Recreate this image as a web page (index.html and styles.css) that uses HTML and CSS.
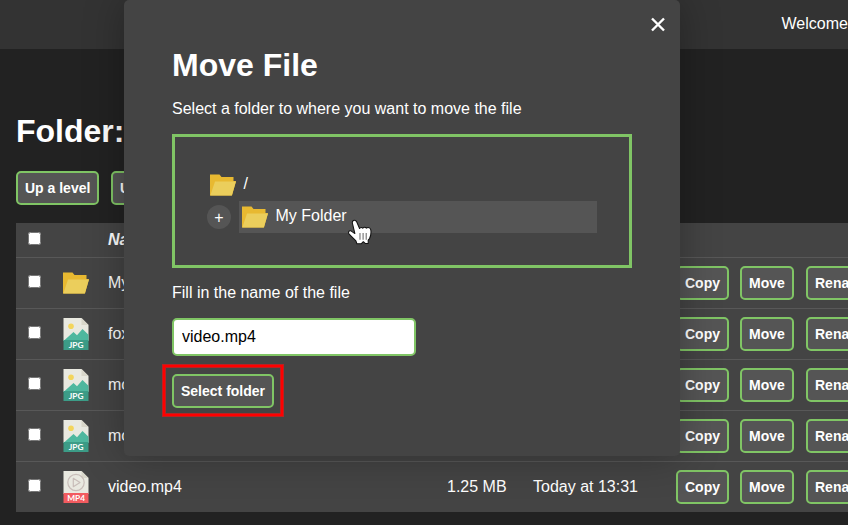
FILE: index.html
```html
<!DOCTYPE html>
<html lang="en">
<head>
<meta charset="utf-8">
<title>Move File</title>
<link rel="stylesheet" href="styles.css">
</head>
<body>
<svg class="defs" width="0" height="0">
  <symbol id="folder" viewBox="0 0 26 22">
    <path fill="#e8b931" d="M0 0.4H9.5L11.5 3H23.5V7H26L22 21.6H0Z"/>
    <path fill="#ebce5c" d="M5 7.5H26L21.8 21.6H0.3Z"/>
  </symbol>
  <symbol id="jpg" viewBox="0 0 26 32">
    <path fill="#e9e9e0" d="M.5 0H18.5L25.5 7V23H.5Z"/>
    <path fill="#d9d7ca" d="M18.5 0V7H25.5Z"/>
    <circle cx="8" cy="8.3" r="2.8" fill="#f3d55b"/>
    <path fill="#4fb89f" d="M.5 23L10.5 14L14 17.2L19.5 11L25.5 16.8V23Z"/>
    <path fill="#3c9c87" d="M.5 22H25.5V32H.5Z"/>
    <text x="13.1" y="30.2" class="ext">JPG</text>
  </symbol>
  <symbol id="mp4" viewBox="0 0 26 32">
    <path fill="#e9e9e0" d="M.5 0H18.5L25.5 7V23H.5Z"/>
    <path fill="#d9d7ca" d="M18.5 0V7H25.5Z"/>
    <circle cx="13" cy="11.5" r="8.2" fill="none" stroke="#c8bdb8" stroke-width="1.2"/>
    <path fill="none" stroke="#c8bdb8" stroke-width="1.2" stroke-linejoin="round" d="M10.3 7.3L17 11.5L10.3 15.7Z"/>
    <path fill="#f25b5f" d="M.5 22H25.5V32H.5Z"/>
    <text x="13.1" y="30.2" class="ext">MP4</text>
  </symbol>
</svg>

<header class="topbar">Welcome</header>
<main class="page">
  <h1 class="heading">Folder:</h1>
  <div class="toolbar">
    <button class="btn up">Up a level</button>
    <button class="btn">Upload</button>
  </div>
  <div class="files">
    <div class="row head"><input type="checkbox"><span></span><em>Name</em></div>
    <div class="row">
      <input type="checkbox"><svg class="folder"><use href="#folder"/></svg><span>My Folder</span><span></span><span></span>
      <div class="actions"><button class="btn copy">Copy</button><button class="btn move">Move</button><button class="btn">Rename</button></div>
    </div>
    <div class="row">
      <input type="checkbox"><svg class="doc"><use href="#jpg"/></svg><span>fox.jpg</span><span></span><span></span>
      <div class="actions"><button class="btn copy">Copy</button><button class="btn move">Move</button><button class="btn">Rename</button></div>
    </div>
    <div class="row">
      <input type="checkbox"><svg class="doc"><use href="#jpg"/></svg><span>mo</span><span></span><span></span>
      <div class="actions"><button class="btn copy">Copy</button><button class="btn move">Move</button><button class="btn">Rename</button></div>
    </div>
    <div class="row">
      <input type="checkbox"><svg class="doc"><use href="#jpg"/></svg><span>mo</span><span></span><span></span>
      <div class="actions"><button class="btn copy">Copy</button><button class="btn move">Move</button><button class="btn">Rename</button></div>
    </div>
    <div class="row">
      <input type="checkbox"><svg class="doc"><use href="#mp4"/></svg><span>video.mp4</span><span>1.25 MB</span><span>Today at 13:31</span>
      <div class="actions"><button class="btn copy">Copy</button><button class="btn move">Move</button><button class="btn">Rename</button></div>
    </div>
  </div>
</main>

<section class="modal">
  <svg class="close" viewBox="0 0 14 14"><path d="M1 1L13 13M13 1L1 13"/></svg>
  <h2 class="heading">Move File</h2>
  <p class="hint">Select a folder to where you want to move the file</p>
  <div class="tree">
    <div class="node"><svg class="folder"><use href="#folder"/></svg><span>/</span></div>
    <div class="branch">
      <span class="expand">+</span>
      <div class="node selected"><svg class="folder"><use href="#folder"/></svg><span>My Folder</span>
        <svg class="cursor" viewBox="0 0 24 25"><path fill="#fff" stroke="#111" stroke-width="1" stroke-linejoin="round" d="M5.2 1.5C6.5.8 7.8 1.5 8.3 2.7L11.1 9.2C11.8 7.9 13.4 7.8 14.2 8.9C15.3 7.6 16.9 7.8 17.6 8.8C19.2 7.7 21.6 8.4 21.9 10.4C22.3 13 22 16.2 20.7 18.8L19.4 20.3V23.5H16.5L14.7 21.8L12.6 23.8H8.5L7.6 21L1.1 14.6C-.2 12.7.9 10.8 2.8 11.4L6.6 14L4.3 4.5C3.9 3.2 4.2 2.1 5.2 1.5Z"/><path stroke="#777" stroke-width="1.1" d="M11.5 13.5V20M14.5 13.5V20M17.5 13.5V20"/></svg>
      </div>
    </div>
  </div>
  <p class="hint second">Fill in the name of the file</p>
  <input class="name" type="text" value="video.mp4">
  <div class="marked"><button class="btn">Select folder</button></div>
</section>
</body>
</html>
```
FILE: styles.css
```css
* { box-sizing: border-box; }
body {
  margin: 0;
  height: 525px;
  overflow: hidden;
  background: #222;
  color: #fff;
  font: 16px/18px "Liberation Sans", Arial, sans-serif;
}
.defs { display: none; }
.ext {
  fill: #fff;
  font: 700 8.3px Lato, sans-serif;
  text-anchor: middle;
}
.topbar {
  height: 49px;
  padding: 15px 0 0 781.5px;
  background: #333;
  white-space: nowrap;
}
.page { padding: 64px 0 0 16px; }
.heading { margin: 0; font-size: 32px; line-height: 36px; font-weight: bold; }
.toolbar { display: flex; gap: 12px; margin-top: 22px; }
.btn {
  flex: none;
  height: 34px;
  padding: 0 7px;
  border: 2px solid #80c565;
  border-radius: 5px;
  background: #555;
  color: #fff;
  font: bold 14px "Liberation Sans", Arial, sans-serif;
  white-space: nowrap;
}
.up { width: 83px; }
.files { margin-top: 18px; background: #444; }
.row {
  display: grid;
  grid-template-columns: 47px 45px 339px 86px 143px 200px;
  align-items: center;
  height: 51px;
  border-bottom: 1px solid #585858;
}
.row:last-child { height: 50px; border-bottom: 0; }
.row > span { white-space: nowrap; }
.head { height: 35px; font-weight: bold; }
.row input { width: 13px; height: 13px; margin: 0 0 3px 12px; }
.folder { width: 26px; height: 22px; flex: none; }
.doc { width: 26px; height: 32px; }
.actions { display: flex; }
.copy { width: 53px; margin-right: 11px; }
.move { width: 54px; margin-right: 12px; }

.modal {
  position: absolute;
  left: 124px;
  top: 0;
  width: 556px;
  height: 456px;
  padding: 47px 48px 0;
  border-radius: 5px;
  background: #444;
  box-shadow: 0 0 40px rgba(0, 0, 0, .3);
}
.close { position: absolute; right: 15px; top: 17px; width: 14px; height: 15px; }
.close path { stroke: #fff; stroke-width: 2.4; }
.hint { margin: 17px 0 0; }
.second { margin-top: 16px; }
.tree {
  height: 134px;
  margin-top: 16px;
  padding: 32px;
  border: 3px solid #80c565;
}
.node { display: flex; gap: 7.5px; height: 32px; padding: 5px 3px; }
.node > span { padding-top: 1px; }
.branch { display: flex; align-items: center; gap: 8px; }
.expand {
  width: 24px;
  height: 24px;
  border-radius: 50%;
  background: #555;
  line-height: 25px;
  text-align: center;
}
.selected { position: relative; flex: 1; background: #555; }
.cursor { position: absolute; left: 109px; top: 18px; width: 25px; height: 26px; }
.name {
  display: block;
  width: 244px;
  height: 38px;
  margin-top: 16px;
  padding: 0 8px;
  border: 2px solid #80c565;
  border-radius: 5px;
  background: #fff;
  color: #000;
  font: 16px "Liberation Sans", Arial, sans-serif;
}
.marked {
  display: flex;
  align-items: center;
  justify-content: center;
  width: 122px;
  height: 53px;
  margin: 8px 0 0 -10px;
  border: 1px solid #b82222;
  box-shadow: inset 0 0 0 2px #f00, inset 0 0 0 3px #b82222;
}
.marked .btn { width: 102px; }
```
